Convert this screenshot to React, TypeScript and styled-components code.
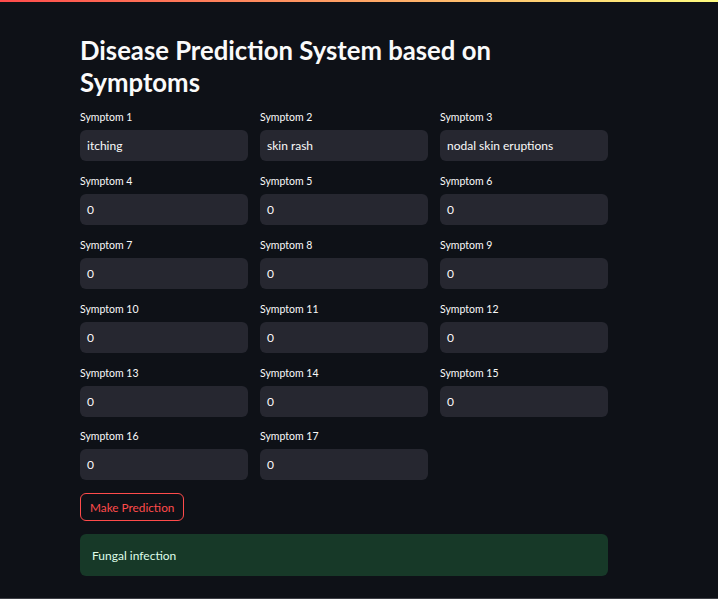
import React from 'react';
import styled, { createGlobalStyle } from 'styled-components';

const GlobalStyle = createGlobalStyle`
  html, body {
    margin: 0;
    padding: 0;
    background: #0e1117;
  }
  body {
    font-family: 'Lato', 'Liberation Sans', sans-serif;
    color: #fafafa;
  }
`;

const Page = styled.div`
  height: 599px;
  box-sizing: border-box;
  background: #0e1117;
  border-bottom: 1px solid #3d3f45;
  display: flex;
  flex-direction: column;
`;

const Decoration = styled.div`
  height: 2px;
  background: linear-gradient(90deg, rgb(255, 75, 75), rgb(255, 253, 128));
`;

const Main = styled.div`
  width: 528px;
  padding: 32px 0 0 80px;
  display: flex;
  flex-direction: column;
`;

const Title = styled.h1`
  margin: 0 0 12px;
  max-width: 480px;
  font-size: 25.7px;
  line-height: 32px;
  font-weight: 700;
  color: #fafafa;
`;

const Grid = styled.div`
  display: grid;
  grid-template-columns: repeat(3, 168px);
  column-gap: 12px;
  row-gap: 12.9px;
`;

const Field = styled.div`
  display: flex;
  flex-direction: column;
  gap: 6px;
`;

const Label = styled.label`
  font-size: 10.5px;
  line-height: 14px;
  color: #fafafa;
`;

const Input = styled.div`
  height: 31px;
  box-sizing: border-box;
  background: #262730;
  border-radius: 6px;
  padding: 0 7px;
  display: flex;
  align-items: center;
  font-size: 12px;
  color: #fafafa;
`;

const Button = styled.button`
  align-self: flex-start;
  margin-top: 13px;
  height: 28px;
  padding: 0 9px;
  background: transparent;
  border: 1px solid #ff4b4b;
  border-radius: 6px;
  color: #ff4b4b;
  font-family: inherit;
  font-size: 11.8px;
`;

const Success = styled.div`
  margin-top: 13px;
  height: 42px;
  box-sizing: border-box;
  background: #173928;
  border-radius: 6px;
  padding: 0 12px;
  display: flex;
  align-items: center;
  font-size: 12px;
  color: #dffde9;
`;

const values = ['itching', 'skin rash', 'nodal skin eruptions'];

export default function App() {
  const fields = Array.from({ length: 17 }, (_, i) => ({
    label: `Symptom ${i + 1}`,
    value: values[i] ?? '0',
  }));
  return (
    <>
      <GlobalStyle />
      <Page>
        <Decoration />
        <Main>
          <Title>Disease Prediction System based on Symptoms</Title>
          <Grid>
            {fields.map(f => (
              <Field key={f.label}>
                <Label>{f.label}</Label>
                <Input>{f.value}</Input>
              </Field>
            ))}
          </Grid>
          <Button>Make Prediction</Button>
          <Success>Fungal infection</Success>
        </Main>
      </Page>
    </>
  );
}
